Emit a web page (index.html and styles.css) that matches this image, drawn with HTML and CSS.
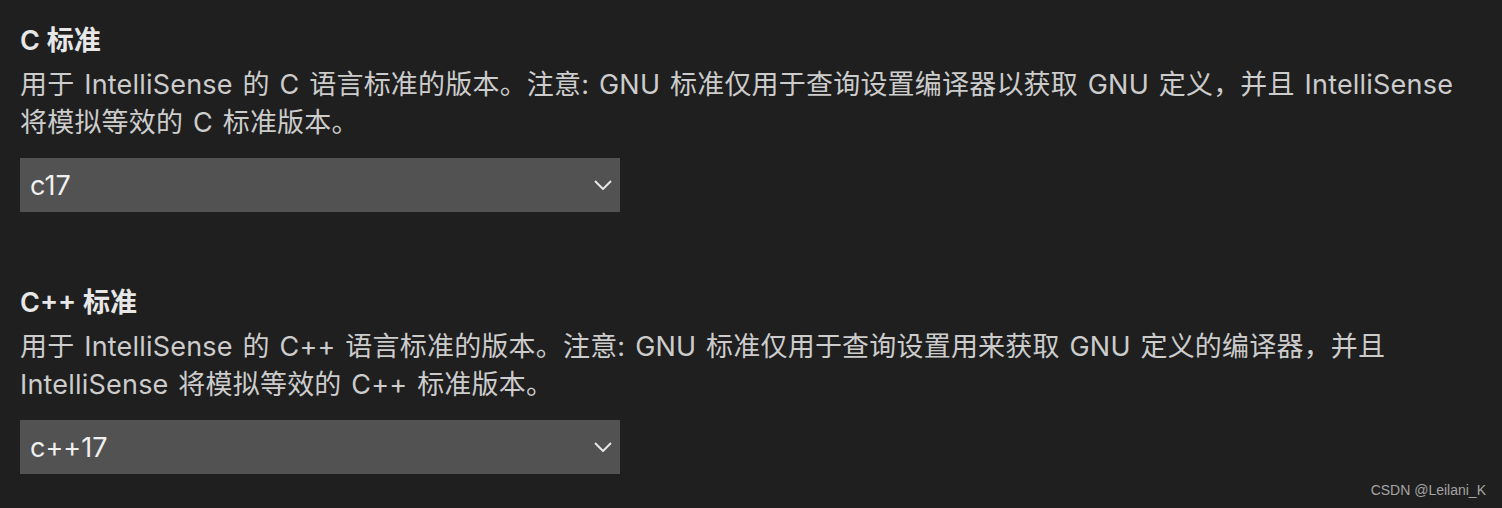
FILE: index.html
```html
<!DOCTYPE html>
<html lang="zh-CN">
<head>
  <meta charset="UTF-8">
  <title>C/C++ 配置</title>
  <link rel="stylesheet" href="styles.css">
</head>
<body>
  <main class="settings">
    <section class="setting">
      <h2 class="setting-title">C 标准</h2>
      <p class="setting-desc">用于 IntelliSense 的 C 语言标准的版本。注意: GNU 标准仅用于查询设置编译器以获取 GNU 定义，并且 IntelliSense 将模拟等效的 C 标准版本。</p>
      <div class="select">
        <span class="select-value">c17</span>
        <svg class="chevron" viewBox="0 0 18 10" width="18" height="10">
          <path d="M1 1l8 8 8-8"/>
        </svg>
      </div>
    </section>

    <section class="setting">
      <h2 class="setting-title">C++ 标准</h2>
      <p class="setting-desc">用于 IntelliSense 的 C++ 语言标准的版本。注意: GNU 标准仅用于查询设置用来获取 GNU 定义的编译器，并且 IntelliSense 将模拟等效的 C++ 标准版本。</p>
      <div class="select">
        <span class="select-value">c++17</span>
        <svg class="chevron" viewBox="0 0 18 10" width="18" height="10">
          <path d="M1 1l8 8 8-8"/>
        </svg>
      </div>
    </section>
  </main>

  <div class="watermark">CSDN @Leilani_K</div>
</body>
</html>
```

FILE: styles.css
```css
/* Pannello impostazioni, tema scuro */
body {
  background: #1f1f1f;
  color: #cccccc;
  font-family: Inter, "Noto Sans CJK SC", sans-serif;
  margin: 0;
  height: 508px;
  overflow: hidden;
  position: relative;
}

.settings {
  padding: 21px 36px 0 20px;
  display: flex;
  flex-direction: column;
  gap: 71px;
}

.setting-title {
  margin: 0;
  font-size: 27px;
  font-weight: 600;
  line-height: 40px;
  color: #e7e7e7;
}

.setting-desc {
  margin: 5px 0 0;
  font-size: 27px;
  line-height: 38px;
  letter-spacing: 0.2px;
  word-spacing: 2px;
  color: #cccccc;
}

.select {
  margin-top: 16px;
  width: 600px;
  height: 54px;
  box-sizing: border-box;
  background: #525252;
  display: flex;
  align-items: center;
  justify-content: space-between;
  padding: 0 8px 0 10px;
}

.select-value {
  font-size: 27px;
  color: #f0f0f0;
}

.chevron path {
  fill: none;
  stroke: #e6e6e6;
  stroke-width: 2;
}

.watermark {
  position: absolute;
  right: 16px;
  bottom: 10px;
  font-family: "Liberation Sans", sans-serif;
  font-size: 14px;
  color: #a4a4a4;
}
```
